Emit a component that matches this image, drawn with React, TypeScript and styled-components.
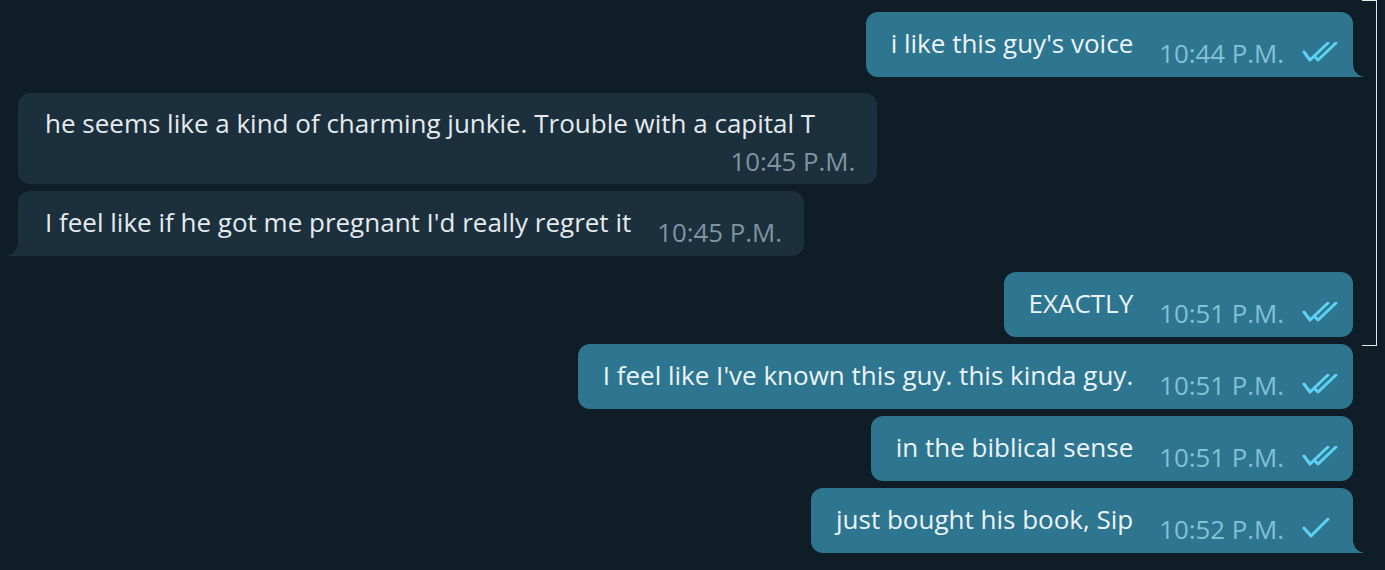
import React from "react";
import styled, { createGlobalStyle, css } from "styled-components";

const Global = createGlobalStyle`
  html, body { margin: 0; padding: 0; background: #0f1d26; }
  body { font-family: "Open Sans", "Noto Sans", sans-serif; }
`;

const OUT_BG = "#2e7590";
const IN_BG = "#1c2f3c";

const Page = styled.div`
  position: relative;
  width: 1385px;
  height: 570px;
  overflow: hidden;
  background: #0f1d26;
  box-sizing: border-box;
  padding: 12px 32px 0 18px;
  display: flex;
  flex-direction: column;
  gap: 16px;
`;

const Group = styled.div<{ $out?: boolean }>`
  display: flex;
  flex-direction: column;
  gap: 7px;
  align-items: ${(p) => (p.$out ? "flex-end" : "flex-start")};
`;

const Bubble = styled.div<{ $out?: boolean; $tail?: boolean; $stacked?: boolean }>`
  position: relative;
  display: flex;
  flex-direction: ${(p) => (p.$stacked ? "column" : "row")};
  align-items: ${(p) => (p.$stacked ? "flex-end" : "flex-start")};
  background: ${(p) => (p.$out ? OUT_BG : IN_BG)};
  color: ${(p) => (p.$out ? "#eaf4f8" : "#e4eaee")};
  border-radius: 12px;
  height: ${(p) => (p.$stacked ? "91px" : "65px")};
  box-sizing: border-box;
  padding: ${(p) =>
    p.$stacked ? "13px 22px 0 27px" : p.$out ? "14px 15px 0 25px" : "14px 22px 0 27px"};
  font-size: 26px;
  line-height: 35px;
  ${(p) =>
    p.$tail &&
    (p.$out
      ? css`
          border-bottom-right-radius: 0;
          &::after {
            content: "";
            position: absolute;
            right: -12px;
            bottom: 0;
            width: 12px;
            height: 12px;
            background: radial-gradient(circle at 100% 0, transparent 11.5px, ${OUT_BG} 12px);
          }
        `
      : css`
          border-bottom-left-radius: 0;
          &::after {
            content: "";
            position: absolute;
            left: -13px;
            bottom: 0;
            width: 13px;
            height: 13px;
            background: radial-gradient(circle at 0 0, transparent 12.5px, ${IN_BG} 13px);
          }
        `)}
`;

const Text = styled.span<{ $stacked?: boolean }>`
  white-space: nowrap;
  align-self: ${(p) => (p.$stacked ? "flex-start" : "auto")};
  padding-right: ${(p) => (p.$stacked ? "40px" : "0")};
`;

const Meta = styled.span<{ $out?: boolean; $stacked?: boolean }>`
  display: flex;
  align-items: center;
  gap: 18px;
  margin-left: ${(p) => (p.$stacked ? "0" : "26px")};
  margin-top: ${(p) => (p.$stacked ? "3px" : "10px")};
  color: ${(p) => (p.$out ? "#84c0d8" : "#7e95a2")};
  font-size: 25.8px;
  font-weight: 400;
  white-space: nowrap;
`;

const Checks = styled.svg`
  width: 36px;
  height: 20px;
  flex: none;
  margin-top: -4px;
`;

const Bracket = styled.div`
  position: absolute;
  top: 0;
  right: 8px;
  width: 14px;
  height: 344px;
  border: 1.5px solid #e6e9eb;
  border-left: none;
`;

const CheckIcon = ({ double }: { double?: boolean }) => (
  <Checks viewBox="0 0 36 20" fill="none" stroke="#5dd2f4" strokeWidth="3" strokeLinecap="round" strokeLinejoin="round">
    {double ? (
      <>
        <path d="M2 10 L8 18 L26 1" />
        <path d="M13 15 L16 18 L34 1" />
      </>
    ) : (
      <path d="M2 10 L9 18 L26 1" />
    )}
  </Checks>
);

type Msg = { text: string; time: string; double?: boolean; stacked?: boolean };

const groups: { out: boolean; msgs: Msg[] }[] = [
  { out: true, msgs: [{ text: "i like this guy's voice", time: "10:44 P.M.", double: true }] },
  {
    out: false,
    msgs: [
      { text: "he seems like a kind of charming junkie. Trouble with a capital T", time: "10:45 P.M.", stacked: true },
      { text: "I feel like if he got me pregnant I'd really regret it", time: "10:45 P.M." },
    ],
  },
  {
    out: true,
    msgs: [
      { text: "EXACTLY", time: "10:51 P.M.", double: true },
      { text: "I feel like I've known this guy. this kinda guy.", time: "10:51 P.M.", double: true },
      { text: "in the biblical sense", time: "10:51 P.M.", double: true },
      { text: "just bought his book, Sip", time: "10:52 P.M.", double: false },
    ],
  },
];

export default function App() {
  return (
    <>
      <Global />
      <Page>
        {groups.map((g, gi) => (
          <Group key={gi} $out={g.out}>
            {g.msgs.map((m, mi) => (
              <Bubble key={mi} $out={g.out} $tail={mi === g.msgs.length - 1} $stacked={m.stacked}>
                <Text $stacked={m.stacked}>{m.text}</Text>
                <Meta $out={g.out} $stacked={m.stacked}>
                  {m.time}
                  {g.out && <CheckIcon double={m.double} />}
                </Meta>
              </Bubble>
            ))}
          </Group>
        ))}
        <Bracket />
      </Page>
    </>
  );
}
